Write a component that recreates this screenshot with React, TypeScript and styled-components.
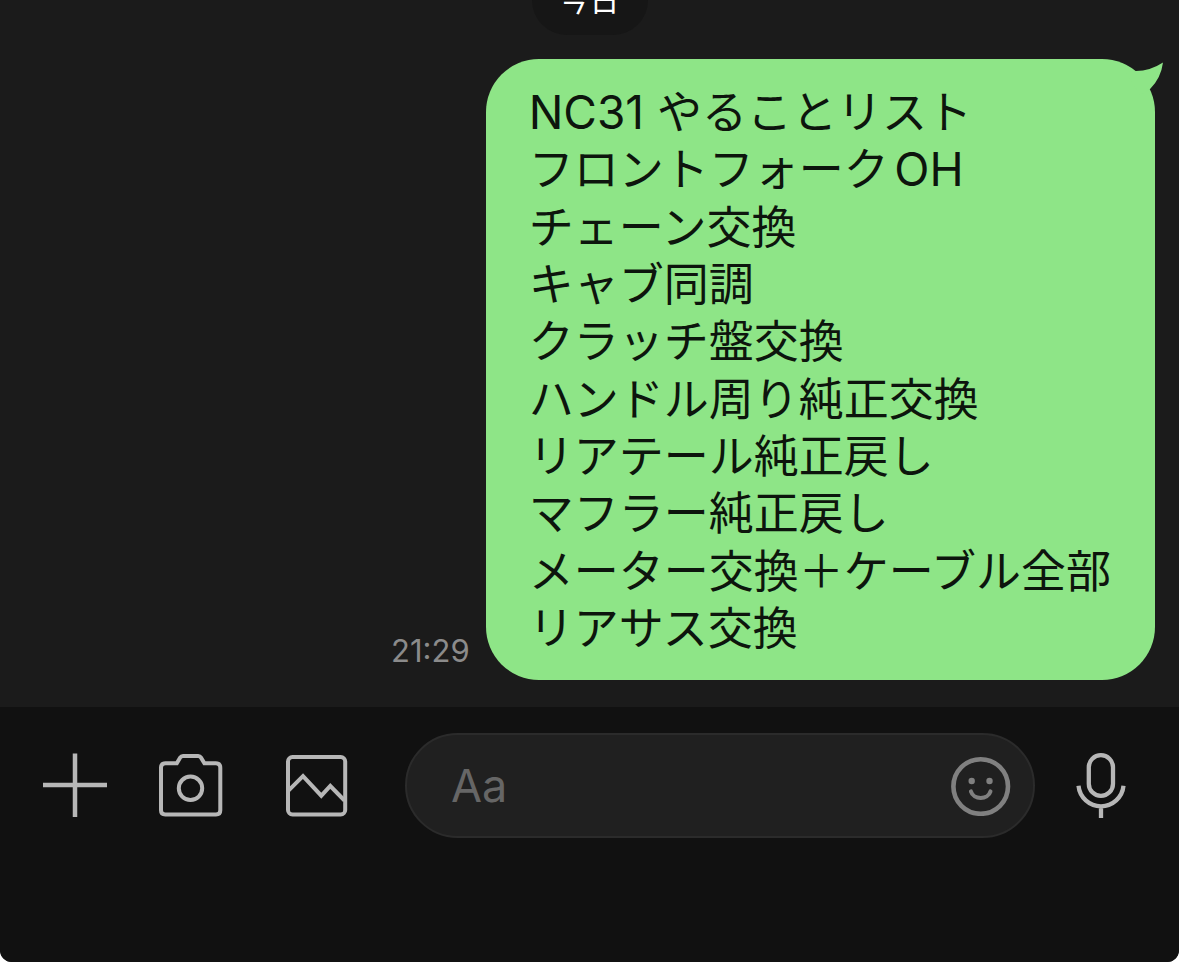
import React from "react";
import styled, { createGlobalStyle } from "styled-components";

const GlobalStyle = createGlobalStyle`
  * { box-sizing: border-box; }
  body {
    margin: 0;
    background: #ffffff;
    font-family: Inter, "Noto Sans CJK JP", sans-serif;
  }
`;

const Screen = styled.div`
  display: flex;
  flex-direction: column;
  height: 100vh;
  background: #1b1b1b;
  border-radius: 0 0 12px 12px;
  overflow: hidden;
`;

const Conversation = styled.main`
  flex: 1;
  min-height: 0;
  display: flex;
  flex-direction: column;
  justify-content: flex-end;
  gap: 24px;
  padding: 0 24px 27px;
  overflow: hidden;
`;

const DateBadge = styled.time`
  flex: none;
  align-self: center;
  padding: 0 28px;
  border-radius: 35px;
  background: #161616;
  color: #ffffff;
  font-size: 30px;
  line-height: 70px;
`;

const SentMessage = styled.article`
  flex: none;
  display: flex;
  justify-content: flex-end;
  align-items: flex-end;
  gap: 16px;
`;

const SentTime = styled.time`
  padding-bottom: 11px;
  color: #8b8b8b;
  font-size: 31px;
  line-height: 36px;
`;

const Bubble = styled.div`
  position: relative;
  padding: 25px 44px 23px 43px;
  border-radius: 53px;
  background: #8ee587;
  color: #0d150d;
`;

const Tail = styled.svg`
  position: absolute;
  top: 0;
  right: -10px;
`;

const Lines = styled.div`
  display: flex;
  flex-direction: column;
  justify-content: space-between;
  min-height: 573px;
`;

const Line = styled.p`
  margin: 0;
  font-size: 45px;
  line-height: 57px;
  white-space: nowrap;
  text-autospace: normal;
`;

const Latin = styled.span`
  font-size: 46px;
`;

const Composer = styled.form`
  flex: none;
  display: grid;
  grid-template-columns: 116px 126px 120px 1fr 91px;
  align-items: center;
  padding: 26px 53px 124px 43px;
  background: #111111;
`;

const IconButton = styled.button<{ $tone?: string; $end?: boolean }>`
  display: block;
  justify-self: ${(p) => (p.$end ? "end" : "start")};
  padding: 0;
  border: 0;
  background: none;
  color: ${(p) => p.$tone ?? "#b7b7b7"};
  cursor: pointer;

  svg {
    display: block;
    fill: none;
    stroke: currentColor;
    stroke-width: 4;
  }
`;

const Field = styled.div`
  display: flex;
  align-items: center;
  height: 105px;
  min-width: 0;
  padding: 0 22px 0 44px;
  border: 2px solid #2b2b2b;
  border-radius: 53px;
  background: #202020;
`;

const TextInput = styled.input`
  flex: 1;
  min-width: 0;
  padding: 0;
  border: 0;
  outline: 0;
  background: none;
  color: #ffffff;
  font-family: inherit;
  font-size: 45px;
  line-height: 57px;

  &::placeholder {
    color: #666666;
    opacity: 1;
  }
`;

const lines: React.ReactNode[] = [
  <><Latin>NC31 </Latin>やることリスト</>,
  <>フロントフォーク<Latin>OH</Latin></>,
  "チェーン交換",
  "キャブ同調",
  "クラッチ盤交換",
  "ハンドル周り純正交換",
  "リアテール純正戻し",
  "マフラー純正戻し",
  "メーター交換＋ケーブル全部",
  "リアサス交換",
];

export default function App() {
  return (
    <>
      <GlobalStyle />
      <Screen lang="ja">
        <Conversation>
          <DateBadge>今日</DateBadge>
          <SentMessage>
            <SentTime>21:29</SentTime>
            <Bubble>
              <Lines>
                {lines.map((line, i) => (
                  <Line key={i}>{line}</Line>
                ))}
              </Lines>
              <Tail width="50" height="40" viewBox="0 0 50 40" aria-hidden="true">
                <path
                  d="M10 12H21Q35 12 48 3.5Q46 19 35.3 29.7L25 36Z"
                  fill="#8ee587"
                />
              </Tail>
            </Bubble>
          </SentMessage>
        </Conversation>
        <Composer onSubmit={(e) => e.preventDefault()}>
          <IconButton type="button" aria-label="追加">
            <svg width="64" height="65" viewBox="0 0 64 65">
              <path d="M32 0.5V64M0 32H64" strokeWidth="4.5" />
            </svg>
          </IconButton>
          <IconButton type="button" aria-label="カメラ">
            <svg width="64" height="65" viewBox="0 0 64 65">
              <path d="M6.5 10.3H17.8L21.2 4.6Q22.2 3 24 3H39.2Q41 3 42 4.6L45.4 10.3H56.8Q61.3 10.3 61.3 14.8V57.3Q61.3 61.5 57 61.5H6.3Q2 61.5 2 57.3V14.8Q2 10.3 6.5 10.3Z" />
              <circle cx="31.5" cy="35.3" r="11.7" />
            </svg>
          </IconButton>
          <IconButton type="button" aria-label="写真">
            <svg width="64" height="65" viewBox="0 0 64 65">
              <rect x="3" y="4" width="57.2" height="57.5" rx="4.5" />
              <path d="M3.7 37.3L18 23.2L36.3 42.7L45.3 33L59.5 47.5" />
            </svg>
          </IconButton>
          <Field>
            <TextInput type="text" placeholder="Aa" aria-label="メッセージを入力" />
            <IconButton type="button" aria-label="スタンプ" $tone="#808080">
              <svg width="61" height="61" viewBox="0 0 61 61">
                <circle cx="30.7" cy="31.5" r="27.3" strokeWidth="4.6" />
                <circle cx="21.7" cy="26" r="3.2" fill="currentColor" stroke="none" />
                <circle cx="39.5" cy="26" r="3.2" fill="currentColor" stroke="none" />
                <path d="M20.9 36.4C23.5 45.2 37.9 45.2 40.5 36.4" strokeLinecap="round" />
              </svg>
            </IconButton>
          </Field>
          <IconButton type="button" aria-label="音声" $end>
            <svg width="50" height="65" viewBox="0 0 50 65">
              <rect x="12.8" y="2.2" width="24.2" height="40.6" rx="12.1" strokeWidth="4.3" />
              <path d="M2.5 32.8A22.6 22.6 0 0 0 47.5 32.8M25 53V65" strokeWidth="4.3" />
            </svg>
          </IconButton>
        </Composer>
      </Screen>
    </>
  );
}
